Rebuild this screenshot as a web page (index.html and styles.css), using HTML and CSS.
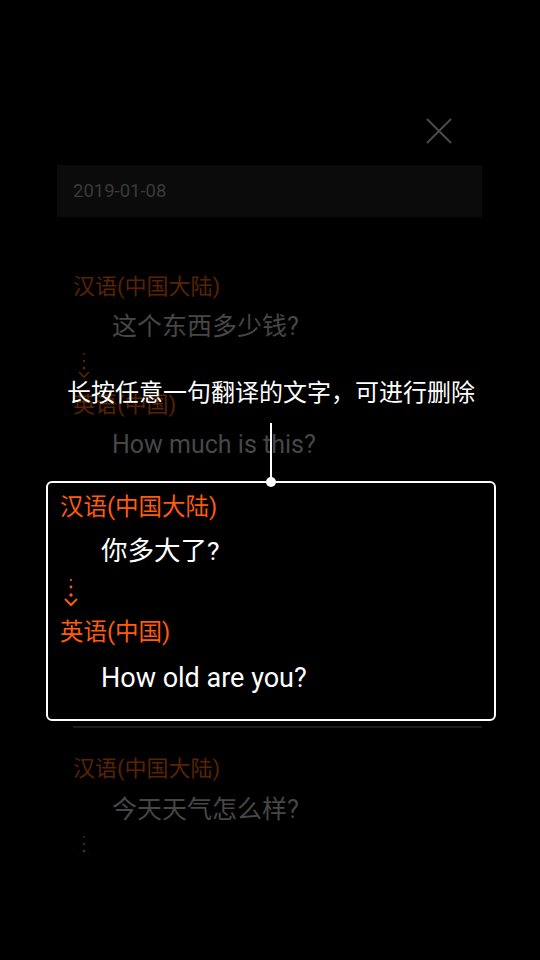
FILE: index.html
```html
<!DOCTYPE html>
<html lang="zh-CN">
<head>
<meta charset="utf-8">
<title>翻译记录</title>
<link rel="stylesheet" href="styles.css">
</head>
<body>
<div class="page">
  <div class="topbar">
    <svg class="close" width="26" height="26" viewBox="0 0 26 26"><path d="M1 1 L25 25 M25 1 L1 25" stroke="#4a4a4a" stroke-width="2" fill="none"/></svg>
  </div>
  <div class="datebar">2019-01-08</div>

  <div class="list">
    <div class="item">
      <div class="label dim">汉语(中国大陆)</div>
      <div class="text dim">这个东西多少钱?</div>
      <svg class="arrow" width="16" height="30" viewBox="0 0 16 30"><g fill="#5a2300"><circle cx="8" cy="4" r="1"/><circle cx="8" cy="11" r="1.2"/><circle cx="8" cy="18" r="1.5"/></g><path d="M3 22 L8 27 L13 22" stroke="#5a2300" stroke-width="1.6" fill="none"/></svg>
      <div class="label dim l2">英语(中国)</div>
      <div class="text dim">How much is this?</div>
    </div>

    <div class="item hl-item">
      <div class="hl">
        <div class="hl-label">汉语(中国大陆)</div>
        <div class="hl-text">你多大了?</div>
        <svg class="hl-arrow" width="18" height="32" viewBox="0 0 18 32"><g fill="#ff5b0a"><circle cx="9" cy="4" r="1.1"/><circle cx="9" cy="11" r="1.4"/><circle cx="9" cy="19" r="1.7"/></g><path d="M3 23 L9 29 L15 23" stroke="#ff5b0a" stroke-width="2" fill="none"/></svg>
        <div class="hl-label hl-l2">英语(中国)</div>
        <div class="hl-text hl-t2">How old are you?</div>
      </div>
      <div class="sep"></div>
    </div>

    <div class="item item3">
      <div class="label dim">汉语(中国大陆)</div>
      <div class="text dim">今天天气怎么样?</div>
      <svg class="arrow" width="16" height="30" viewBox="0 0 16 30"><g fill="#5a2300"><circle cx="8" cy="4" r="1"/><circle cx="8" cy="11" r="1.2"/><circle cx="8" cy="18" r="1.5"/></g><path d="M3 22 L8 27 L13 22" stroke="#5a2300" stroke-width="1.6" fill="none"/></svg>
    </div>
  </div>

  <div class="tip">
    <div class="tip-text">长按任意一句翻译的文字，可进行删除</div>
    <div class="tip-line"></div>
    <div class="tip-dot"></div>
  </div>
</div>
</body>
</html>
```

FILE: styles.css
```css
html, body {
  margin: 0;
  padding: 0;
  background: #000;
}
body {
  font-family: Roboto, "Noto Sans CJK SC", sans-serif;
  width: 540px;
  height: 960px;
  overflow: hidden;
}
.page {
  position: relative;
  width: 540px;
  height: 960px;
}
.topbar {
  height: 165px;
  box-sizing: border-box;
  display: flex;
  justify-content: flex-end;
  align-items: flex-start;
  padding: 118px 88px 0 0;
}
.close {
  display: block;
}
.datebar {
  margin: 0 58px 0 57px;
  height: 52px;
  line-height: 52px;
  background: #0b0b0b;
  padding-left: 16px;
  font-size: 18.5px;
  color: #3a3a3a;
}
.list {
  margin-top: 55px;
  height: 583px;
  overflow: hidden;
  padding: 0 58px 0 73px;
}
.label {
  font-size: 22px;
  line-height: 30px;
  height: 30px;
}
.label.dim {
  color: #5a2300;
}
.text {
  font-size: 25px;
  line-height: 36px;
  margin-top: 7px;
  padding-left: 39px;
}
.text.dim {
  color: #474747;
}
.arrow {
  display: block;
  margin: 5px 0 0 3px;
}
.l2 {
  margin-top: 10px;
}
.hl-item {
  margin-top: 18px;
}
.hl {
  margin-left: -27px;
  width: 450px;
  height: 240px;
  box-sizing: border-box;
  border: 2px solid #fff;
  border-radius: 6px;
  padding: 8px 0 0 12px;
  background: #000;
}
.hl-label {
  font-size: 23.5px;
  line-height: 32px;
  height: 32px;
  color: #ff5b0a;
}
.hl-text {
  font-size: 26.5px;
  line-height: 38px;
  color: #fff;
  margin-top: 9px;
  padding-left: 41px;
}
.hl-arrow {
  display: block;
  margin: 6px 0 0 2px;
}
.hl-l2 {
  margin-top: 8px;
}
.hl-t2 {
  margin-top: 11px;
  font-size: 27px;
}
.sep {
  height: 2px;
  background: #1a1a1a;
  margin-top: 5px;
}
.item3 {
  margin-top: 26px;
}
.item3 .text {
  margin-top: 8px;
}
.tip {
  position: absolute;
  left: 0;
  right: 0;
  top: 377px;
  display: flex;
  flex-direction: column;
  align-items: center;
  padding-left: 2px;
}
.tip-text {
  font-size: 24px;
  line-height: 32px;
  color: #fff;
}
.tip-line {
  width: 2px;
  height: 59px;
  margin-top: 14px;
  background: #fff;
}
.tip-dot {
  width: 10px;
  height: 10px;
  border-radius: 50%;
  background: #fff;
  margin-top: -5px;
}
```
